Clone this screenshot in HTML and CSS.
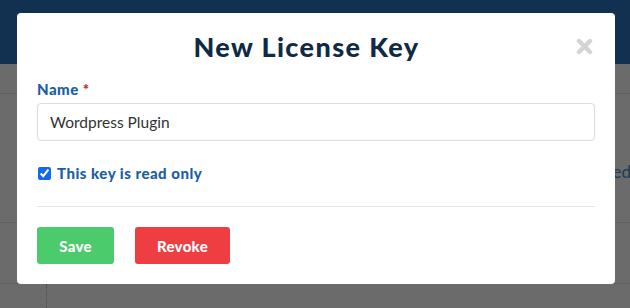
FILE: index.html
```html
<!DOCTYPE html>
<html lang="en">
<head>
    <meta charset="UTF-8">
    <title>New License Key</title>
    <link rel="stylesheet" href="styles.css">
</head>
<body>
    <div class="page">
        <header class="topbar"></header>
        <div class="row row-first"></div>
        <div class="row row-tall">
            <span class="cell-text">Used</span>
        </div>
        <div class="row row-mid"></div>
        <div class="row row-last">
            <div class="cell-narrow"></div>
        </div>
    </div>

    <div class="modal">
        <div class="modal-head">
            <h1>New License Key</h1>
            <button class="close" aria-label="Close">
                <svg width="17" height="17" viewBox="0 0 17 17">
                    <path d="M3 3 L14 14 M14 3 L3 14" stroke="#d4d4d4" stroke-width="4.4" stroke-linecap="round"/>
                </svg>
            </button>
        </div>

        <form>
            <label class="field-label" for="name">Name <span class="req">*</span></label>
            <input id="name" value="Wordpress Plugin">

            <label class="check">
                <input type="checkbox" checked>
                <span>This key is read only</span>
            </label>

            <hr>

            <div class="actions">
                <button type="button" class="btn btn-save">Save</button>
                <button type="button" class="btn btn-revoke">Revoke</button>
            </div>
        </form>
    </div>
</body>
</html>
```

FILE: styles.css
```css
body {
    margin: 0;
    font-family: Lato, 'Noto Sans', sans-serif;
    background: #6b6b6b;
    height: 308px;
    overflow: hidden;
}

/* page behind the backdrop */
.page {
    display: flex;
    flex-direction: column;
    height: 308px;
    overflow: hidden;
}

.topbar {
    flex: none;
    height: 64px;
    background: #12304f;
}

.row {
    flex: none;
    border-bottom: 1px solid #5f5f5f;
}

.row-first {
    height: 29px;
}

.row-tall {
    height: 129px;
    box-sizing: border-box;
    display: flex;
    align-items: flex-start;
    padding: 68px 0 0 593px;
    white-space: nowrap;
}

.cell-text {
    font-size: 17px;
    line-height: 20px;
    color: #1d3a5a;
}

.row-mid {
    height: 60px;
}

.row-last {
    flex: 1;
    border-bottom: none;
    display: flex;
}

.cell-narrow {
    width: 46px;
    border-right: 1px dotted #4e4e4e;
}

/* modal */
.modal {
    position: absolute;
    top: 13px;
    left: 17px;
    width: 598px;
    height: 271px;
    box-sizing: border-box;
    background: #fff;
    border-radius: 4px;
    padding: 0 20px;
}

.modal-head {
    display: flex;
    align-items: center;
    height: 67px;
}

.modal-head h1 {
    flex: 1;
    margin: 0;
    text-align: center;
    font-size: 27px;
    font-weight: 900;
    letter-spacing: 1.4px;
    color: #0f2a45;
}

.close {
    width: 17px;
    height: 17px;
    padding: 0;
    border: none;
    background: none;
    margin-right: 2px;
    display: flex;
}

form {
    display: flex;
    flex-direction: column;
}

.field-label {
    font-size: 15px;
    font-weight: 900;
    letter-spacing: 0.5px;
    color: #1a5ea6;
    margin-bottom: 5px;
}

.req {
    color: #b03232;
}

#name {
    height: 38px;
    box-sizing: border-box;
    border: 1px solid #dcdcdc;
    border-radius: 4px;
    padding: 0 12px;
    font-family: inherit;
    font-size: 15.5px;
    color: #333;
    outline: none;
}

.check {
    display: flex;
    align-items: center;
    gap: 6px;
    margin-top: 23px;
    font-size: 15px;
    font-weight: 900;
    letter-spacing: 0.5px;
    color: #1a5ea6;
}

.check input {
    margin: 0 0 0 1px;
    width: 13px;
    height: 13px;
    accent-color: #1268f0;
}

hr {
    width: 100%;
    margin: 24px 0 0;
    border: none;
    border-top: 1px solid #e6e6e6;
}

.actions {
    display: flex;
    gap: 21px;
    margin-top: 20px;
}

.btn {
    height: 37px;
    border: none;
    border-radius: 3px;
    color: #fff;
    font-family: inherit;
    font-size: 15px;
    font-weight: 900;
    letter-spacing: 0.3px;
}

.btn-save {
    width: 77px;
    background: #4ccb6d;
}

.btn-revoke {
    width: 95px;
    background: #ef3e42;
}
```
